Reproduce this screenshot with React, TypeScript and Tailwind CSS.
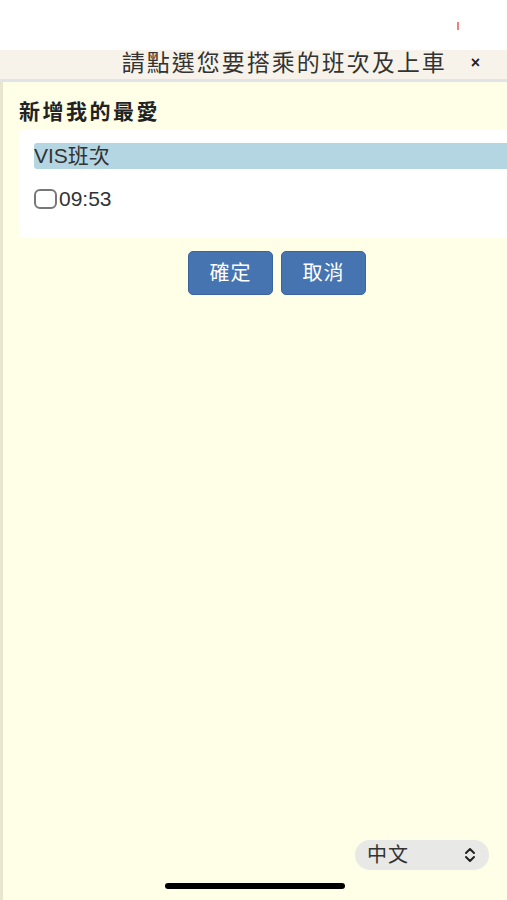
import { useState } from "react";

const FONT = { fontFamily: '"Liberation Sans", "Noto Sans CJK TC", sans-serif' };

export default function App() {
  const [checked, setChecked] = useState(false);

  return (
    <div className="relative flex h-[900px] w-[507px] flex-col overflow-hidden bg-white text-[#333]" style={FONT}>
      {/* status area */}
      <div className="relative h-[50px] shrink-0 bg-white">
        <span className="absolute left-[457px] top-[22px] h-[8px] w-[2px] bg-[#f08080]" />
      </div>

      {/* dialog title */}
      <div className="flex h-[29px] shrink-0 items-center justify-end bg-[#f7f3ea] pb-[3px] pr-[27px]">
        <span className="mr-[24px] text-[23px] leading-none tracking-[2px] text-[#333]">請點選您要搭乘的班次及上車</span>
        <span className="text-[16px] font-bold leading-none text-[#222]">×</span>
      </div>
      <div className="h-[3px] shrink-0 bg-[#dfe5e6]" />

      {/* body */}
      <div className="flex flex-1 flex-col border-l-[3px] border-[#e9e6cf] bg-[#fffee6] pl-[16px]">
        <h2 className="mt-[19px] text-[21px] font-bold leading-none tracking-[2.5px] text-[#222]">新增我的最愛</h2>

        <div className="mt-[8px] rounded-l-[5px] bg-white pb-[23px] pl-[15px] pt-[13px]">
          <div className="flex h-[26px] items-center rounded-l-[3px] bg-[#b4d6e3] text-[21px] text-[#333]">VIS班次</div>
          <label className="mt-[14px] flex items-center text-[21px] text-[#333]">
            <button
              type="button"
              onClick={() => setChecked(!checked)}
              className="flex h-[20px] w-[23px] items-center justify-center rounded-[6px] border-2 border-[#777] bg-white"
            >
              {checked && <span className="text-[14px] leading-none">✓</span>}
            </button>
            <span className="ml-[2px]">09:53</span>
          </label>
        </div>

        <div className="mt-[13px] flex justify-center gap-[8px] pl-[28px]">
          <button className="h-[44px] w-[85px] rounded-[5px] border border-[#3c65a0] bg-[#4674b0] text-[20px] tracking-[1px] text-white">確定</button>
          <button className="h-[44px] w-[85px] rounded-[5px] border border-[#3c65a0] bg-[#4674b0] text-[20px] tracking-[1px] text-white">取消</button>
        </div>

        <div className="flex-1" />

        <div className="mb-[30px] flex justify-end pr-[18px]">
          <div className="flex h-[30px] w-[134px] items-center justify-between rounded-full bg-[#e8e8e6] pl-[12px] pr-[12px]">
            <span className="text-[20px] tracking-[1px] text-[#333]">中文</span>
            <svg width="14" height="16" viewBox="0 0 14 16" fill="none" stroke="#222" strokeWidth="2" strokeLinecap="round" strokeLinejoin="round">
              <path d="M3 6l4-4 4 4" />
              <path d="M3 10l4 4 4-4" />
            </svg>
          </div>
        </div>
      </div>

      {/* home indicator */}
      <div className="absolute bottom-[11px] left-[165px] h-[6px] w-[180px] rounded-full bg-black" />
    </div>
  );
}
